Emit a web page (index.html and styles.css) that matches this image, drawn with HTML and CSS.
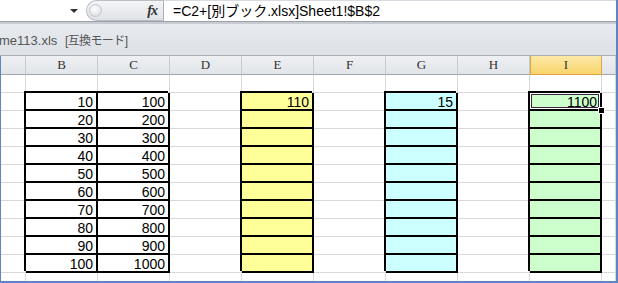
FILE: index.html
```html
<!DOCTYPE html>
<html lang="ja">
<head>
  <meta charset="UTF-8" />
  <title>Excel - 別ブック参照</title>
  <link rel="stylesheet" href="styles.css">
</head>
<body>
  <div class="app">
    <div class="formula-bar">
      <div class="name-box"><span class="drop"></span></div>
      <div class="fx-box"><span class="knob"></span><span class="fx">fx</span></div>
      <div class="formula">=C2+[別ブック.xlsx]Sheet1!$B$2</div>
    </div>
    <div class="title-band">me113.xls <span class="mode">[互換モード]</span></div>
    <div class="sheet" id="sheet"></div>
  </div>

  <script>
    const cols = ['A', 'B', 'C', 'D', 'E', 'F', 'G', 'H', 'I', ''];
    const sheet = document.getElementById('sheet');
    let html = '';

    // column headers
    cols.forEach((c, i) => {
      const cls = c === 'I' ? 'hd active' : 'hd';
      html += `<div class="${cls}">${i === 0 ? '' : c}</div>`;
    });

    // rows 1..12
    for (let r = 1; r <= 12; r++) {
      cols.forEach((c, i) => {
        let cls = 'c';
        let val = '';
        if (r === 12) cls += ' last';
        if (r >= 2 && r <= 11) {
          if (c === 'B') { cls += ' box'; val = (r - 1) * 10; }
          if (c === 'C') { cls += ' box'; val = (r - 1) * 100; }
          if (c === 'E') { cls += ' box yellow'; if (r === 2) val = 110; }
          if (c === 'G') { cls += ' box cyan'; if (r === 2) val = 15; }
          if (c === 'I') { cls += ' box green'; if (r === 2) { val = 1100; cls += ' sel'; } }
        }
        html += `<div class="${cls}">${val}</div>`;
      });
    }
    sheet.innerHTML = html;
  </script>
</body>
</html>
```

FILE: styles.css
```css
body { margin: 0; background: #fff; font-family: 'Liberation Sans', 'Noto Sans CJK JP', sans-serif; }
.app { width: 618px; height: 283px; overflow: hidden; box-sizing: border-box; border-right: 2px solid #5b86c2; border-bottom: 2px solid #5b86c2; background: #fff; }

/* formula bar */
.formula-bar { display: flex; height: 22px; border-bottom: 1px solid #9aa1a8; box-sizing: border-box; background: #fff; }
.name-box { width: 86px; display: flex; align-items: center; justify-content: flex-end; padding-right: 8px; box-sizing: border-box; }
.drop { width: 0; height: 0; border-left: 4px solid transparent; border-right: 4px solid transparent; border-top: 4px solid #333; }
.fx-box { width: 78px; display: flex; align-items: center; justify-content: space-between; padding: 0 6px 0 2px; box-sizing: border-box; background: linear-gradient(#f4f5f7, #dfe2e6); border: 1px solid #b9bec5; border-right: 1px solid #a9aeb5; border-radius: 11px 0 0 11px; }
.knob { width: 11px; height: 11px; border-radius: 50%; background: radial-gradient(circle at 40% 35%, #fff, #d4d8dd); border: 1px solid #c3c7cc; }
.fx { font-family: 'Liberation Serif', serif; font-style: italic; font-weight: bold; font-size: 14px; color: #333; letter-spacing: -1px; }
.formula { flex: 1; padding-left: 9px; font-size: 14px; line-height: 21px; color: #000; border-top: 1px solid #d6dbe1; }

/* workbook title band */
.title-band { height: 34px; box-sizing: border-box; border-top: 2px solid #c8ccd2; border-bottom: 1px solid #a7aeb6; background: linear-gradient(#e7eaee, #dde1e6); padding-top: 8px; margin-left: -1px; font-size: 13px; color: #555; line-height: 17px; white-space: nowrap; }
.mode { font-size: 12px; letter-spacing: -0.6px; margin-left: 4px; }

/* grid */
.sheet { display: grid; grid-template-columns: 25px repeat(8, 72px) 1fr; grid-template-rows: 19px repeat(11, 18px) 8px; border-left: 1px solid #5b86c2; }
.hd { box-sizing: border-box; border-right: 1px solid #c5cad1; border-bottom: 1px solid #9ea6ae; background: linear-gradient(#eef0f3, #e1e4e8); font-family: 'Liberation Serif', serif; font-size: 13px; color: #333; text-align: center; line-height: 18px; }
.hd.active { background: linear-gradient(#fde9a8, #f8d46a); border: 1px solid #e2a341; border-top: none; line-height: 18px; }
.c { box-sizing: border-box; border-right: 1px solid #d8d8d8; border-bottom: 1px solid #d8d8d8; font-size: 14px; line-height: 18px; text-align: right; padding-right: 4px; color: #000; overflow: hidden; }
.c.last { border-bottom: none; }
.box { border-right: 2px solid #000; border-bottom: 2px solid #000; box-shadow: -2px -2px 0 #000; padding-right: 3px; }
.yellow { background: #ffff99; }
.cyan { background: #ccffff; }
.green { background: #ccffcc; }
.sel { position: relative; overflow: visible; }
.sel::before { content: ''; position: absolute; inset: 0; border: 1px solid #fff; box-shadow: inset 0 0 0 1px #3b2340; }
.sel::after { content: ''; position: absolute; right: -5px; bottom: -5px; width: 5px; height: 5px; background: #000; border: 1px solid #fff; }
```
